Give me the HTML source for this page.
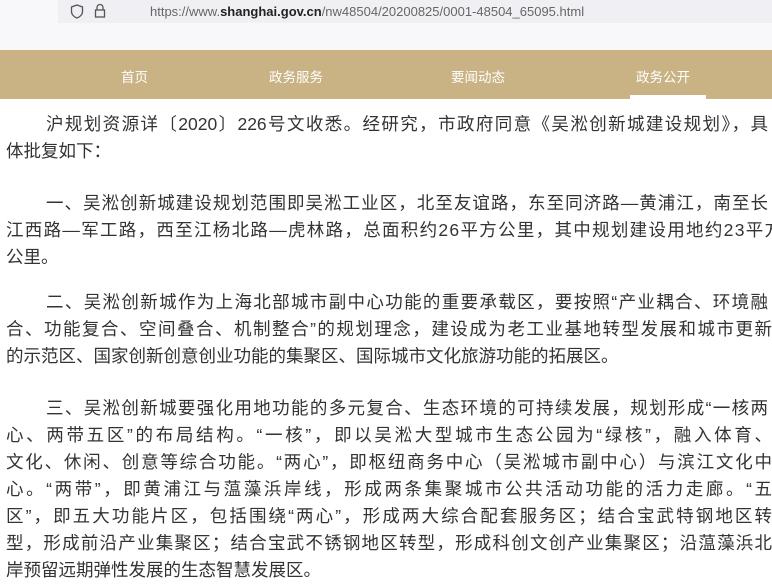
<!DOCTYPE html>
<html><head><meta charset="utf-8"><style>
body{margin:0;width:772px;height:581px;overflow:hidden;background:#fff;font-family:"Liberation Sans","Noto Sans CJK SC",sans-serif;position:relative}
.top{position:absolute;left:0;top:0;width:772px;height:50px;background:#f8f8fa}
.addr{position:absolute;left:58px;top:0;width:714px;height:23px;background:#f0f0f4;font-size:13px;color:#666;line-height:21px}
.nav{position:absolute;left:0;top:50px;width:772px;height:49px;background:#c9b283;color:#fff;font-size:13.5px}
.nav span{position:absolute;top:16px}
.ul{position:absolute;left:630px;top:95px;width:76px;height:4px;background:#fff}
.p{position:absolute;left:6px;width:766px;font-size:17.5px;line-height:27px;color:#333}
.p div{white-space:nowrap;text-align-last:justify;text-align:justify}
.p div.l{text-align-last:left}
</style></head><body>
<div class="top"></div>
<div class="addr"><svg style="position:absolute;left:12px;top:4px" width="14" height="15" viewBox="0 0 14 15"><path d="M7 1L12.5 3V7.5C12.5 10.5 10 13 7 14C4 13 1.5 10.5 1.5 7.5V3Z" fill="none" stroke="#555" stroke-width="1.3"/></svg><svg style="position:absolute;left:36px;top:3px" width="12" height="16" viewBox="0 0 12 16"><path d="M3 7V4.5a3 3 0 0 1 6 0V7" fill="none" stroke="#555" stroke-width="1.3"/><rect x="1.5" y="7" width="9" height="7" fill="none" stroke="#555" stroke-width="1.3"/></svg><span style="position:absolute;left:92px;top:1px">https://www.<b style="color:#222;font-weight:bold">shanghai.gov.cn</b>/nw48504/20200825/0001-48504_65095.html</span></div>
<div class="nav"><span style="left:121px">首页</span><span style="left:269px">政务服务</span><span style="left:451px">要闻动态</span><span style="left:636px">政务公开</span></div>
<div class="ul"></div>
<div class="p" style="top:111px"><div style="padding-left:40px;width:722px">沪规划资源详〔2020〕226号文收悉。经研究，市政府同意《吴淞创新城建设规划》，具</div><div class="l">体批复如下：</div></div>
<div class="p" style="top:190px"><div style="padding-left:40px;width:722px">一、吴淞创新城建设规划范围即吴淞工业区，北至友谊路，东至同济路—黄浦江，南至长</div><div class="l" style="letter-spacing:1.3px">江西路—军工路，西至江杨北路—虎林路，总面积约26平方公里，其中规划建设用地约23平方</div><div class="l">公里。</div></div>
<div class="p" style="top:289px"><div style="padding-left:40px;width:722px">二、吴淞创新城作为上海北部城市副中心功能的重要承载区，要按照“产业耦合、环境融</div><div>合、功能复合、空间叠合、机制整合”的规划理念，建设成为老工业基地转型发展和城市更新</div><div class="l">的示范区、国家创新创意创业功能的集聚区、国际城市文化旅游功能的拓展区。</div></div>
<div class="p" style="top:395px"><div style="padding-left:40px;width:722px">三、吴淞创新城要强化用地功能的多元复合、生态环境的可持续发展，规划形成“一核两</div><div>心、两带五区”的布局结构。“一核”，即以吴淞大型城市生态公园为“绿核”，融入体育、</div><div>文化、休闲、创意等综合功能。“两心”，即枢纽商务中心（吴淞城市副中心）与滨江文化中</div><div>心。“两带”，即黄浦江与蕰藻浜岸线，形成两条集聚城市公共活动功能的活力走廊。“五</div><div>区”，即五大功能片区，包括围绕“两心”，形成两大综合配套服务区；结合宝武特钢地区转</div><div>型，形成前沿产业集聚区；结合宝武不锈钢地区转型，形成科创文创产业集聚区；沿蕰藻浜北</div><div class="l">岸预留远期弹性发展的生态智慧发展区。</div></div>
</body></html>
